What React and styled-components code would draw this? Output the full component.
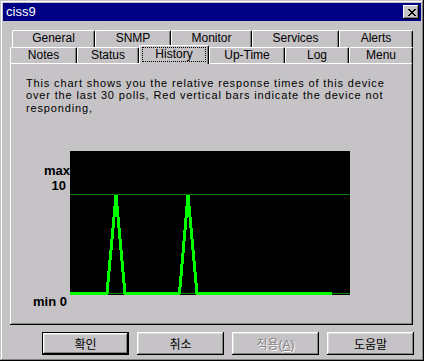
import React from 'react';
import styled, { createGlobalStyle } from 'styled-components';

const FACE = '#c6c3c6';
const SHADOW = '#848284';

const GlobalStyle = createGlobalStyle`
  html, body {
    margin: 0;
    padding: 0;
    background: ${FACE};
  }
`;

const backTabs = [
  { label: 'General', w: 83 },
  { label: 'SNMP', w: 76 },
  { label: 'Monitor', w: 81 },
  { label: 'Services', w: 87 },
  { label: 'Alerts', w: 74 },
];

const frontTabs = [
  { label: 'Notes', w: 67 },
  { label: 'Status', w: 62 },
  { label: 'History', w: 70, active: true },
  { label: 'Up-Time', w: 76 },
  { label: 'Log', w: 64 },
  { label: 'Menu', w: 64 },
];

const buttons = [
  { label: '확인', isDefault: true },
  { label: '취소' },
  { label: '적용(', accel: 'A', tail: ')', disabled: true },
  { label: '도움말' },
];

const App = () => {
  return (
    <>
      <GlobalStyle />
      <Window>
        <TitleBar>
          <Title>ciss9</Title>
          <CloseButton aria-label="close">
            <svg width="8" height="7" viewBox="0 0 8 7" shapeRendering="crispEdges">
              <path
                fill="#000"
                d="M0 0h2v1H0zM6 0h2v1H6zM1 1h2v1H1zM5 1h2v1H5zM2 2h4v1H2zM3 3h2v1H3zM2 4h4v1H2zM1 5h2v1H1zM5 5h2v1H5zM0 6h2v1H0zM6 6h2v1H6z"
              />
            </svg>
          </CloseButton>
        </TitleBar>

        <TabBar>
          <TabRow $h={17} $indent={2}>
            {backTabs.map((t) => (
              <Tab key={t.label} $w={t.w}>
                {t.label}
              </Tab>
            ))}
          </TabRow>
          <TabRow $h={16} $indent={0}>
            {frontTabs.map((t) => (
              <Tab key={t.label} $w={t.w} $active={t.active}>
                {t.active ? <Focus>{t.label}</Focus> : t.label}
              </Tab>
            ))}
          </TabRow>
        </TabBar>

        <Panel>
          <Description>
            This chart shows you the relative response times of this device
            <br />
            over the last 30 polls, Red vertical bars indicate the device not
            <br />
            responding,
          </Description>

          <ChartRow>
            <Axis>
              <AxisLabel $top={12} $pad={0}>max</AxisLabel>
              <AxisLabel $top={0} $pad={4}>10</AxisLabel>
              <AxisLabel $top={101} $pad={3}>min 0</AxisLabel>
            </Axis>
            <svg width="280" height="144" viewBox="0 0 280 144" shapeRendering="crispEdges">
              <rect width="280" height="144" fill="#000" />
              <line x1="0" x2="280" y1="43.5" y2="43.5" stroke="#008200" strokeWidth="1" />
              <line x1="0" x2="280" y1="142.5" y2="142.5" stroke="#008200" strokeWidth="1" />
              <polyline
                points="0,142.5 37,142.5 46,44 55,142.5 109.5,142.5 118,44 127,142.5 262,142.5"
                fill="none"
                stroke="#00ff00"
                strokeWidth="3"
                strokeLinejoin="bevel"
              />
            </svg>
          </ChartRow>
        </Panel>

        <ButtonRow>
          {buttons.map((b) => (
            <Button key={b.label} $default={b.isDefault} disabled={b.disabled}>
              {b.label}
              {b.accel && <u>{b.accel}</u>}
              {b.tail}
            </Button>
          ))}
        </ButtonRow>
      </Window>
    </>
  );
};

export default App;

const Window = styled.div`
  width: 424px;
  height: 361px;
  box-sizing: border-box;
  padding: 3px;
  background: ${FACE};
  box-shadow: inset -1px -1px #000, inset 1px 1px ${FACE}, inset -2px -2px ${SHADOW},
    inset 2px 2px #fff;
  font-family: 'Liberation Sans', Arial, sans-serif;
  color: #000;
`;

const TitleBar = styled.div`
  height: 18px;
  background: #000084;
  display: flex;
  align-items: center;
  justify-content: space-between;
  padding: 0 2px 0 3px;
`;

const Title = styled.span`
  color: #fff;
  font-size: 13px;
  line-height: 18px;
`;

const CloseButton = styled.div`
  width: 16px;
  height: 14px;
  box-sizing: border-box;
  background: ${FACE};
  display: flex;
  align-items: center;
  justify-content: center;
  padding-left: 1px;
  box-shadow: inset -1px -1px #000, inset 1px 1px #fff, inset -2px -2px ${SHADOW};
`;

const TabBar = styled.div`
  margin: 9px 0 0 7px;
  width: 403px;
`;

const TabRow = styled.div`
  display: flex;
  height: ${(p) => p.$h}px;
  padding-left: ${(p) => p.$indent}px;
`;

const Tab = styled.div`
  flex: none;
  width: ${(p) => p.$w}px;
  height: ${(p) => (p.$active ? '19px' : '100%')};
  margin-top: ${(p) => (p.$active ? -2 : 0)}px;
  z-index: ${(p) => (p.$active ? 2 : 0)};
  box-sizing: border-box;
  border-top: 1px solid #fff;
  border-left: 1px solid #fff;
  border-right: 1px solid #000;
  border-radius: 2px 2px 0 0;
  box-shadow: inset -1px 0 ${SHADOW};
  background: ${FACE};
  display: flex;
  justify-content: center;
  align-items: flex-start;
  padding-top: ${(p) => (p.$active ? 1 : 0)}px;
  font-size: 12px;
  line-height: 15px;
  white-space: nowrap;
`;

const Focus = styled.span`
  display: block;
  width: 64px;
  height: 15px;
  box-sizing: border-box;
  border: 1px dotted #000;
  text-align: center;
  line-height: 12px;
`;

const Panel = styled.div`
  width: 403px;
  height: 262px;
  margin-left: 7px;
  box-sizing: border-box;
  padding: 14px 16px 0;
  background: ${FACE};
  box-shadow: inset -1px -1px #000, inset 1px 1px #fff, inset -2px -2px ${SHADOW};
`;

const Description = styled.p`
  margin: 0;
  font-size: 11px;
  letter-spacing: 0.85px;
  line-height: 12.4px;
  white-space: nowrap;
`;

const ChartRow = styled.div`
  display: flex;
  margin-top: 37px;
`;

const Axis = styled.div`
  width: 44px;
  display: flex;
  flex-direction: column;
  align-items: flex-end;
`;

const AxisLabel = styled.span`
  margin-top: ${(p) => p.$top}px;
  padding-right: ${(p) => p.$pad}px;
  font-size: 13px;
  font-weight: bold;
  line-height: 15px;
  white-space: nowrap;
`;

const ButtonRow = styled.div`
  display: flex;
  justify-content: flex-end;
  gap: 8px;
  margin-top: 7px;
  padding-right: 7px;
`;

const Button = styled.button`
  width: 87px;
  height: 23px;
  padding: 0;
  box-sizing: border-box;
  background: ${FACE};
  border: ${(p) => (p.$default ? '1px solid #000' : 'none')};
  box-shadow: inset -1px -1px #000, inset 1px 1px #fff, inset -2px -2px ${SHADOW},
    inset 2px 2px #dedbde;
  font-family: 'Liberation Sans', 'Noto Sans CJK KR', sans-serif;
  font-size: 12px;
  color: #000;

  &:disabled {
    color: ${SHADOW};
    text-shadow: 1px 1px #fff;
  }
`;
